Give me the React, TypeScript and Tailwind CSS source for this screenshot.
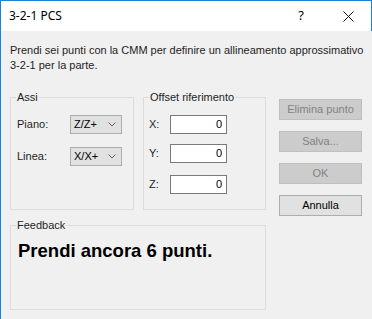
import React from 'react';

const ui = { fontFamily: '"Liberation Sans", Arial, sans-serif' };

function GroupBox({ label, className, children }: { label: string; className: string; children?: React.ReactNode }) {
  return (
    <div className={`relative border border-[#dcdcdc] ${className}`}>
      <span className="absolute -top-[8px] left-[5px] bg-[#f0f0f0] px-[1px] text-[11px] leading-[14px] text-[#1e1e1e]">
        {label}
      </span>
      {children}
    </div>
  );
}

function Select({ value }: { value: string }) {
  return (
    <div className="flex h-[19px] w-[52px] items-center justify-between border border-[#adadad] bg-[#e1e1e1] pl-[3px] pr-[5px] text-[11px] text-black">
      <span>{value}</span>
      <svg width="8" height="5" viewBox="0 0 8 5" fill="none">
        <path d="M0.5 0.5 L4 4 L7.5 0.5" stroke="#606060" strokeWidth="1" />
      </svg>
    </div>
  );
}

function NumInput({ value }: { value: string }) {
  return (
    <div className="flex h-[19px] w-[57px] items-center justify-end border border-[#7a7a7a] bg-white pr-[4px] text-[11px] text-black">
      {value}
    </div>
  );
}

function Button({ label, disabled }: { label: string; disabled?: boolean }) {
  return (
    <div
      className={
        disabled
          ? 'flex h-[21px] w-[83px] items-center justify-center border border-[#bfbfbf] bg-[#cccccc] text-[11px] text-[#838383]'
          : 'flex h-[21px] w-[83px] items-center justify-center border border-[#adadad] bg-[#e1e1e1] text-[11px] text-black'
      }
    >
      {label}
    </div>
  );
}

export default function App() {
  return (
    <div className="flex h-[319px] w-[372px] flex-col overflow-hidden bg-[#f0f0f0] border-l border-[#1883d7]" style={ui}>
      {/* title bar */}
      <div className="flex h-[31px] shrink-0 items-center border-t border-r border-[#1883d7] bg-white pl-[8px]">
        <span className="text-[12px] text-black" style={{ fontFamily: '"Noto Sans", "Open Sans", sans-serif' }}>
          3-2-1 PCS
        </span>
        <span className="ml-auto mr-[39px] text-[13px] text-black" style={{ fontFamily: '"Noto Sans", sans-serif' }}>?</span>
        <svg className="mr-[17px]" width="11" height="11" viewBox="0 0 11 11">
          <path d="M0.5 0.5 L10.5 10.5 M10.5 0.5 L0.5 10.5" stroke="#111" strokeWidth="1" />
        </svg>
      </div>

      <p className="mt-[12px] pl-[9px] text-[11px] leading-[15px] text-[#1e1e1e]">
        Prendi sei punti con la CMM per definire un allineamento approssimativo
        <br />
        3-2-1 per la parte.
      </p>

      <div className="mt-[24px] flex items-start pl-[9px]">
        <GroupBox label="Assi" className="h-[113px] w-[124px]">
          <div className="flex flex-col gap-[13px] pl-[6px] pt-[17px] text-[11px] text-[#1e1e1e]">
            <div className="flex items-center">
              <span className="w-[53px]">Piano:</span>
              <Select value="Z/Z+" />
            </div>
            <div className="flex items-center">
              <span className="w-[53px]">Linea:</span>
              <Select value="X/X+" />
            </div>
          </div>
        </GroupBox>

        <GroupBox label="Offset riferimento" className="ml-[9px] h-[113px] w-[123px]">
          <div className="flex flex-col pl-[5px] pt-[17px] text-[11px] text-[#1e1e1e]">
            <div className="flex items-center">
              <span className="w-[21px]">X:</span>
              <NumInput value="0" />
            </div>
            <div className="mt-[10px] flex items-center">
              <span className="w-[21px]">Y:</span>
              <NumInput value="0" />
            </div>
            <div className="mt-[12px] flex items-center">
              <span className="w-[21px]">Z:</span>
              <NumInput value="0" />
            </div>
          </div>
        </GroupBox>

        <div className="ml-[13px] mt-[2px] flex flex-col gap-[11px]">
          <Button label="Elimina punto" disabled />
          <Button label="Salva..." disabled />
          <Button label="OK" disabled />
          <Button label="Annulla" />
        </div>
      </div>

      <GroupBox label="Feedback" className="ml-[9px] mt-[9px] h-[85px] w-[256px]">
        <p className="pl-[7px] pt-[14px] text-[18.5px] font-bold leading-[22px] text-black">Prendi ancora 6 punti.</p>
      </GroupBox>
    </div>
  );
}
